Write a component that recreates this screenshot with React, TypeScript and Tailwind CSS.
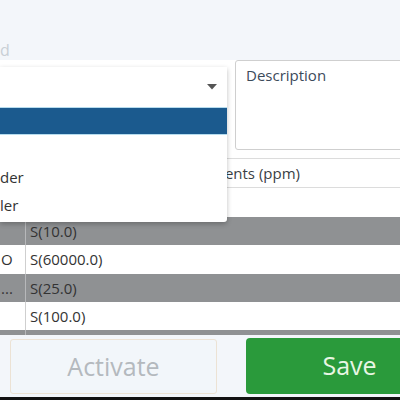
import React from "react";

const rows = [
  { a: "", b: "S(10.0)", gray: true, h: "h-[28px]" },
  { a: "O", b: "S(60000.0)", gray: false, h: "h-[29px]" },
  { a: "...", b: "S(25.0)", gray: true, h: "h-[28px]" },
  { a: "", b: "S(100.0)", gray: false, h: "h-[28px]" },
];

export default function App() {
  return (
    <div className="relative w-[400px] h-[400px] overflow-hidden bg-[#f3f6fa] font-['Open_Sans',sans-serif] text-[#333]">
      {/* top area */}
      <div className="h-[60px] relative">
        <div className="absolute left-0 top-[42px] text-[16px] text-[#c9cfd5] leading-none">d</div>
      </div>

      {/* form area */}
      <div className="bg-white">
        <div className="flex h-[90px]">
          <div className="w-[235px] shrink-0" />
          <div className="w-[220px] shrink-0 border border-[#cfcfcf] rounded-[3px] px-[10px] pt-[3px] text-[15px] text-[#3c4a5a]">
            Description
          </div>
        </div>
        <div className="h-[8px]" />
        <div className="h-[30px] border-y border-[#dcdcdc] flex items-center">
          <div className="w-[300px] text-right text-[15px] text-[#3a3f45] whitespace-nowrap">Ingredients (ppm)</div>
        </div>
        <div className="h-[29px]" />
        {rows.map((r, i) => (
          <div key={i} className={`flex items-center text-[15px] ${r.h} ${r.gray ? "bg-[#8f9193]" : "bg-white"}`}>
            <div className={`w-[26px] h-full flex items-center pl-[1px] border-r ${r.gray ? "border-[#b7b8ba]" : "border-[#cfcfcf]"}`}>
              {r.a}
            </div>
            <div className="pl-[4px]">{r.b}</div>
          </div>
        ))}
        <div className="h-[5px] bg-[#8f9193] flex">
          <div className="w-[26px] h-full border-r border-[#b7b8ba]" />
        </div>
      </div>

      {/* footer */}
      <div className="h-[62px] flex items-start pt-[4px] pl-[10px] gap-[29px]">
        <button className="w-[207px] h-[55px] shrink-0 rounded-[3px] border border-[#ece2d4] bg-[#f2f6fa] text-[25px] text-[#b4b9be]">
          Activate
        </button>
        <button className="w-[207px] h-[56px] shrink-0 rounded-[4px] bg-[#2a9a3b] text-[25px] text-[#e8f6e4] -mt-[1px]">
          Save
        </button>
      </div>
      <div className="h-[3px] bg-[#121212]" />

      {/* dropdown overlay */}
      <div className="absolute left-0 top-[67px] w-[227px] h-[155px] bg-white rounded-br-[3px] shadow-[0_2px_5px_rgba(0,0,0,0.25)]">
        <div className="h-[40px] relative">
          <svg className="absolute left-[207px] top-[17px]" width="10" height="6" viewBox="0 0 10 6">
            <path d="M0 0 L10 0 L5 5.5 Z" fill="#555" />
          </svg>
        </div>
        <div className="h-[28px] border-y border-[#b6dcee] bg-[#1b5a8e]" />
        <div className="h-[28px]" />
        <div className="h-[28px] flex items-center text-[15px] text-[#333]">der</div>
        <div className="h-[28px] flex items-center text-[15px] text-[#333]">ler</div>
      </div>
    </div>
  );
}
